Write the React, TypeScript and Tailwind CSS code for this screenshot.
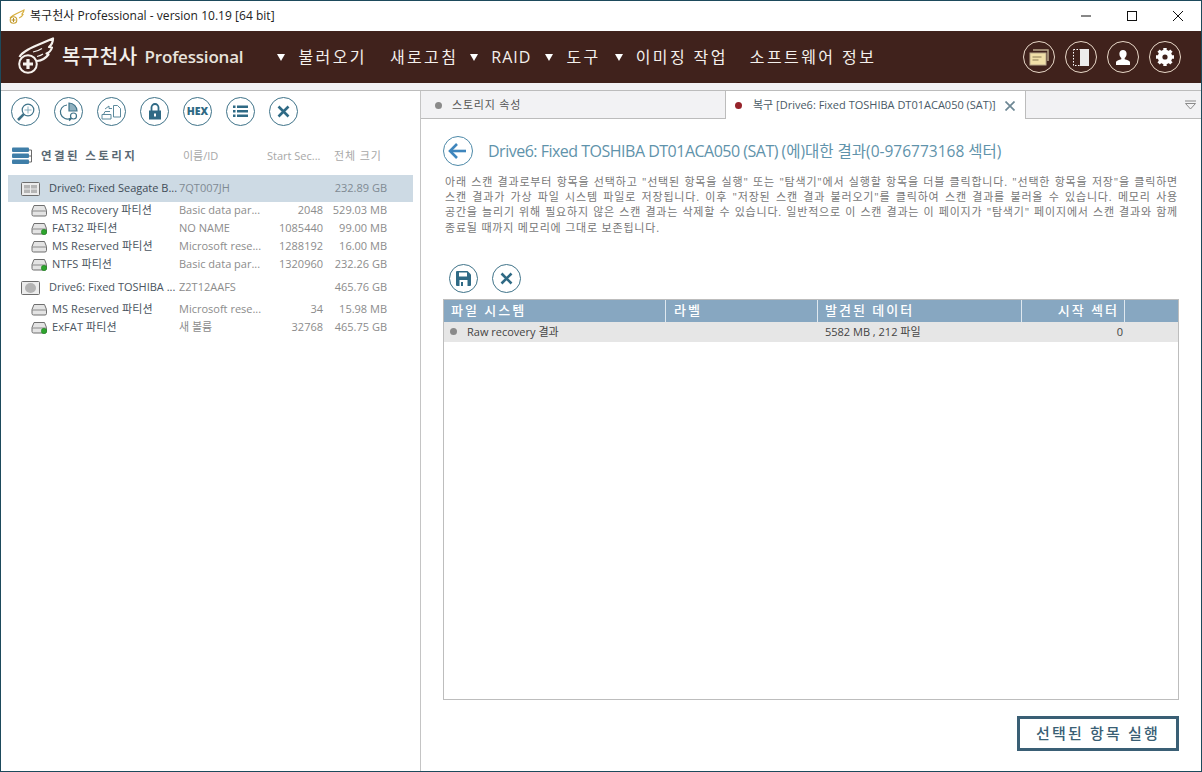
import React from 'react';

const FONT = "font-['Open_Sans','Noto_Sans_CJK_KR',sans-serif]";

const ToolButton = ({ children }: { children: React.ReactNode }) => (
  <div className="w-[29px] h-[29px] rounded-full border border-[#3f7389] flex items-center justify-center text-[#2f6a85] bg-white shrink-0">
    {children}
  </div>
);

const HeaderButton = ({ children }: { children: React.ReactNode }) => (
  <div className="w-[32px] h-[32px] rounded-full border border-[#e8d8c8] flex items-center justify-center shrink-0">
    {children}
  </div>
);

const MenuItem = ({ label, arrow, className, latin }: { label: string; arrow?: boolean; className?: string; latin?: boolean }) => (
  <div className={`flex items-center ${className ?? ''}`}>
    {arrow && (
      <svg width="8" height="7" viewBox="0 0 8 7" className="mr-[13px]">
        <path d="M0 0h8L4 7z" fill="#fff" />
      </svg>
    )}
    <span className={`text-[16px] text-[#f4f0ec] whitespace-nowrap ${latin ? 'tracking-[1px]' : 'tracking-[2.400px]'}`}>{label}</span>
  </div>
);

const PartitionIcon = ({ active }: { active?: boolean }) => (
  <svg width="17" height="13" viewBox="0 0 17 13" className="shrink-0">
    <path d="M3 1.500h10.500l2 5v4a1.500 1.500 0 0 1-1.500 1.500H2.500a1.500 1.500 0 0 1-1.500-1.500v-4z" fill="#e4e4e4" stroke="#6f6f6f" />
    <path d="M1 7h14.500" stroke="#8a8a8a" />
    {active && <circle cx="13" cy="10" r="2.700" fill="#2ea52e" stroke="#1d7d1d" strokeWidth="0.5" />}
  </svg>
);

const DiskIcon = ({ kind }: { kind: 'grid' | 'round' }) => (
  <svg width="19" height="14" viewBox="0 0 19 14" className="shrink-0">
    <rect x="0.500" y="0.500" width="18" height="13" rx="1" fill="#ececec" stroke="#6d6d6d" />
    {kind === 'grid' ? (
      <g fill="#b5b5b5">
        <rect x="3" y="3" width="6" height="3.500" />
        <rect x="10" y="3" width="6" height="3.500" />
        <rect x="3" y="7.500" width="6" height="3.500" />
        <rect x="10" y="7.500" width="6" height="3.500" />
      </g>
    ) : (
      <ellipse cx="9.500" cy="7" rx="5.500" ry="5" fill="#b3b3b3" />
    )}
  </svg>
);

const Columns = ({ name, id, start, size }: { name: string; id: string; start?: string; size: string }) => (
  <>
    <span className="w-[127px] shrink-0 text-[#4a5560] whitespace-nowrap overflow-hidden tracking-[0.1px]">{name}</span>
    <span className="w-[94px] shrink-0 text-[#8c8c8c] whitespace-nowrap">{id}</span>
    <span className="w-[50px] shrink-0 text-right text-[#8c8c8c]">{start}</span>
    <span className="w-[64px] shrink-0 text-right text-[#8c8c8c]">{size}</span>
  </>
);

const PartitionRow = (p: { name: string; id: string; start: string; size: string; active?: boolean; className?: string }) => (
  <div className={`h-[18px] flex items-center pl-[30px] text-[11px] ${p.className ?? ''}`}>
    <PartitionIcon active={p.active} />
    <span className="w-[4px] shrink-0" />
    <Columns name={p.name} id={p.id} start={p.start} size={p.size} />
  </div>
);

const WingLogo = () => (
  <svg width="40" height="40" viewBox="0 0 40 40" className="ml-[15px] shrink-0" fill="none" stroke="#f6f2ee">
    <path d="M3.500 20C7 13 20 9 37 1.500c0 4-1 6-4 8.500l3 .5c-1 3-2.500 5-5.500 6l2 1c-3 4-7 6-11.500 6.500" strokeWidth="2.200" strokeLinejoin="round" />
    <path d="M26 11.500c-3 2-6 3-9 3.500M27 17c-2 1.500-4 2-6 2.500" strokeWidth="1.200" />
    <circle cx="12" cy="27" r="8.800" strokeWidth="2" />
    <path d="M12 22v10M7 27h10" strokeWidth="3.200" />
  </svg>
);

export default function App() {
  return (
    <div className={`${FONT} w-[1202px] h-[772px] flex flex-col border border-[#1d4a5c] bg-white overflow-hidden`}>
      {/* title bar */}
      <div className="h-[30px] flex items-center shrink-0">
        <svg width="16" height="15" viewBox="0 0 16 15" className="ml-[8px]" fill="none" stroke="#d8b040">
          <path d="M1 9C3 6 9 4 15 1c0 2-1 3-2 4l1 .5c-1 2-2 3-4 3.500" strokeWidth="1.200" />
          <circle cx="4.500" cy="11" r="3.300" stroke="#c8a030" strokeWidth="1.100" />
          <path d="M4.500 9v4M2.500 11h4" stroke="#b89020" strokeWidth="1" />
        </svg>
        <span className="ml-[5px] text-[12px] text-[#222] whitespace-nowrap tracking-[0.03px]">복구천사 Professional - version 10.19 [64 bit]</span>
        <div className="ml-auto flex items-center">
          <div className="w-[46px] h-[30px] flex items-center justify-center">
            <svg width="10" height="10" viewBox="0 0 10 10"><path d="M0 5h10" stroke="#111" /></svg>
          </div>
          <div className="w-[46px] h-[30px] flex items-center justify-center">
            <svg width="10" height="10" viewBox="0 0 10 10"><rect x="0.500" y="0.500" width="9" height="9" fill="none" stroke="#111" /></svg>
          </div>
          <div className="w-[46px] h-[30px] flex items-center justify-center">
            <svg width="10" height="10" viewBox="0 0 10 10"><path d="M0 0l10 10M10 0L0 10" stroke="#111" /></svg>
          </div>
        </div>
      </div>

      {/* header */}
      <div className="h-[52px] bg-[#40221c] flex items-center shrink-0 text-white">
        <WingLogo />
        <span className="ml-[6px] text-[20px] font-medium text-[#f4f0ec] whitespace-nowrap tracking-[0.5px]">복구천사</span>
        <span className="ml-[7px] text-[17px] font-semibold text-[#e8e2dc] whitespace-nowrap tracking-[-0.2px]">Professional</span>
        <MenuItem label="불러오기" arrow className="ml-[34px]" />
        <MenuItem label="새로고침" className="ml-[23px]" />
        <MenuItem label="RAID" arrow latin className="ml-[12px]" />
        <MenuItem label="도구" arrow className="ml-[14px]" />
        <MenuItem label="이미징 작업" arrow className="ml-[14px]" />
        <MenuItem label="소프트웨어 정보" className="ml-[22px]" />
        <div className="ml-auto mr-[20px] flex gap-[10px]">
          <HeaderButton>
            <svg width="20" height="17" viewBox="0 0 20 17">
              <path d="M4 1h15v11" fill="none" stroke="#b9a98c" strokeWidth="1.500" />
              <rect x="1" y="4" width="16" height="12" fill="#f1dfa8" stroke="#b9a98c" />
              <path d="M3.500 8h9M3.500 11h6" stroke="#8b7a55" />
            </svg>
          </HeaderButton>
          <HeaderButton>
            <svg width="16" height="17" viewBox="0 0 16 17">
              <rect x="0.500" y="0.500" width="7" height="16" fill="none" stroke="#fff" strokeDasharray="1.500 1.500" />
              <rect x="7" y="0" width="9" height="17" fill="#ececec" />
            </svg>
          </HeaderButton>
          <HeaderButton>
            <svg width="14" height="15" viewBox="0 0 14 15">
              <path d="M7 0a3.600 3.600 0 0 1 3.600 3.800c0 2-.8 3.500-1.900 4.300v1.200c2 .6 5.300 1.400 5.300 3.200V15H0v-2.500c0-1.800 3.300-2.600 5.300-3.200V8.100C4.200 7.300 3.400 5.800 3.400 3.800A3.600 3.600 0 0 1 7 0z" fill="#fff" />
            </svg>
          </HeaderButton>
          <HeaderButton>
            <svg width="20" height="20" viewBox="0 0 20 20">
              <g stroke="#fff" strokeWidth="3.400">
                <path d="M10 1v18M1 10h18M3.600 3.600l12.800 12.800M16.400 3.600L3.600 16.400" />
              </g>
              <circle cx="10" cy="10" r="5.500" fill="none" stroke="#fff" strokeWidth="3.500" />
              <circle cx="10" cy="10" r="2.600" fill="#40221c" />
            </svg>
          </HeaderButton>
        </div>
      </div>

      <div className="h-[7px] bg-[#f3f3f5] shrink-0" />

      {/* main */}
      <div className="flex-1 flex min-h-0 border-t border-[#bcbcbc]">
        {/* left panel */}
        <div className="w-[420px] shrink-0 border-r border-[#c4c4c4] flex flex-col">
          <div className="flex gap-[14px] pl-[10px] pt-[6px]">
            <ToolButton>
              <svg width="20" height="20" viewBox="0 0 20 20" fill="none" stroke="#3f7389" strokeWidth="1.200">
                <circle cx="12" cy="8" r="5.800" />
                <path d="M7.800 12.200L2 18" strokeWidth="2.600" />
                <path d="M12 4.500v7M8.500 8h7" strokeWidth="0.900" stroke="#7ea6b8" />
              </svg>
            </ToolButton>
            <ToolButton>
              <svg width="20" height="20" viewBox="0 0 20 20" fill="none" stroke="#3f7389" strokeWidth="1.200">
                <path d="M8 3a7 7 0 1 0 4 13" />
                <path d="M10 1v8h8a8 8 0 0 0-8-8z" fill="#8fb0bf" />
                <circle cx="14.500" cy="14" r="3" fill="#fff" />
                <path d="M12.300 16.200L10 18.500" strokeWidth="1.800" />
              </svg>
            </ToolButton>
            <ToolButton>
              <svg width="21" height="16" viewBox="0 0 21 16" fill="none" stroke="#5d8a9d" strokeWidth="1">
                <path d="M1 10.500h9V15H1z" />
                <path d="M2.500 10.500L4 7.500h5" />
                <path d="M12.500 1.500h4l3 3V13h-7z" />
                <path d="M4 5l4-3v2.500h3" />
              </svg>
            </ToolButton>
            <ToolButton>
              <svg width="14" height="17" viewBox="0 0 14 17">
                <path d="M3.500 8V4.500a3.500 3.500 0 0 1 7 0V8" fill="none" stroke="#2f6a85" strokeWidth="1.800" />
                <rect x="1" y="7.500" width="12" height="9" fill="#2f6a85" />
                <rect x="6" y="10.500" width="2" height="3" fill="#fff" />
              </svg>
            </ToolButton>
            <ToolButton>
              <span className="text-[10.500px] font-extrabold text-[#2f6a85]">HEX</span>
            </ToolButton>
            <ToolButton>
              <svg width="15" height="13" viewBox="0 0 15 13" fill="#2f6a85">
                <rect x="0" y="0.500" width="2.500" height="2.500" />
                <rect x="0" y="5" width="2.500" height="2.500" />
                <rect x="0" y="9.500" width="2.500" height="2.500" />
                <rect x="4" y="0.500" width="11" height="2.500" />
                <rect x="4" y="5" width="11" height="2.500" />
                <rect x="4" y="9.500" width="11" height="2.500" />
              </svg>
            </ToolButton>
            <ToolButton>
              <svg width="13" height="13" viewBox="0 0 13 13"><path d="M1.500 1.500l10 10M11.500 1.500l-10 10" stroke="#2f6a85" strokeWidth="2.600" /></svg>
            </ToolButton>
          </div>

          {/* column heads */}
          <div className="h-[20px] mt-[20px] flex items-center text-[11px] pl-[11px]">
            <svg width="20" height="18" viewBox="0 0 20 18" className="shrink-0">
              <g fill="#3f7ea8">
                <rect x="0" y="0.500" width="17" height="4.500" rx="1" />
                <rect x="0" y="6.500" width="17" height="4.500" rx="1" />
                <rect x="0" y="12.500" width="17" height="4.500" rx="1" />
              </g>
              <path d="M17 3h2.500v12H17M17 9h2.500" fill="none" stroke="#6a6a6a" />
            </svg>
            <span className="ml-[9px] w-[142px] shrink-0 text-[11.500px] font-semibold text-[#5a6873] tracking-[2.400px] whitespace-nowrap">연결된 스토리지</span>
            <span className="w-[84px] shrink-0 text-[#a8a8a8]">이름/ID</span>
            <span className="w-[67px] shrink-0 text-[#a8a8a8] whitespace-nowrap">Start Sec...</span>
            <span className="text-[#a8a8a8] tracking-[0.9px] whitespace-nowrap">전체 크기</span>
          </div>

          {/* storage list */}
          <div className="mt-[9px] flex flex-col text-[11px]">
            <div className="h-[27px] ml-[7px] w-[405px] bg-[#cddae4] flex items-center pl-[13px]">
              <DiskIcon kind="grid" />
              <span className="w-[9px] shrink-0" />
              <span className="w-[130px] shrink-0 text-[#3f4c57] whitespace-nowrap">Drive0: Fixed Seagate B...</span>
              <span className="w-[94px] shrink-0 text-[#7f8a93]">7QT007JH</span>
              <span className="w-[50px] shrink-0" />
              <span className="w-[64px] shrink-0 text-right text-[#7f8a93]">232.89 GB</span>
            </div>
            <PartitionRow name="MS Recovery 파티션" id="Basic data par..." start="2048" size="529.03 MB" className="-mt-[1px]" />
            <PartitionRow name="FAT32 파티션" id="NO NAME" start="1085440" size="99.00 MB" active />
            <PartitionRow name="MS Reserved 파티션" id="Microsoft rese..." start="1288192" size="16.00 MB" />
            <PartitionRow name="NTFS 파티션" id="Basic data par..." start="1320960" size="232.26 GB" active />
            <div className="h-[27px] ml-[7px] w-[405px] flex items-center pl-[13px] mt-[1px]">
              <DiskIcon kind="round" />
              <span className="w-[9px] shrink-0" />
              <span className="w-[130px] shrink-0 text-[#4a5560] whitespace-nowrap">Drive6: Fixed TOSHIBA ...</span>
              <span className="w-[94px] shrink-0 text-[#8c8c8c]">Z2T12AAFS</span>
              <span className="w-[50px] shrink-0" />
              <span className="w-[64px] shrink-0 text-right text-[#8c8c8c]">465.76 GB</span>
            </div>
            <PartitionRow name="MS Reserved 파티션" id="Microsoft rese..." start="34" size="15.98 MB" className="-mt-[1px]" />
            <PartitionRow name="ExFAT 파티션" id="새 볼륨" start="32768" size="465.75 GB" active />
          </div>
        </div>

        {/* right panel */}
        <div className="flex-1 min-w-0 flex flex-col">
          {/* tabs */}
          <div className="h-[28px] bg-[#f2f2f4] border-b border-[#bcbcbc] flex shrink-0">
            <div className="w-[304px] flex items-center pl-[14px] pt-[1px] text-[11px] text-[#555]">
              <span className="w-[7px] h-[7px] rounded-full bg-[#8a8a8a]" />
              <span className="ml-[10px] tracking-[0.8px]">스토리지 속성</span>
            </div>
            <div className="w-[301px] h-[28px] bg-white border-x border-[#bcbcbc] flex items-center pl-[9px] pt-[1px] text-[11px] text-[#4a5a66]">
              <span className="w-[7px] h-[7px] rounded-full bg-[#96232a]" />
              <span className="ml-[11px] whitespace-nowrap">복구 [Drive6: Fixed TOSHIBA DT01ACA050 (SAT)]</span>
              <svg width="10" height="10" viewBox="0 0 10 10" className="ml-[9px] shrink-0"><path d="M0.500 0.500l9 9M9.500 0.500l-9 9" stroke="#6d8794" strokeWidth="1.700" /></svg>
            </div>
            <div className="ml-auto mr-[5px] self-center">
              <svg width="11" height="10" viewBox="0 0 11 10" fill="none" stroke="#8a8a8a"><path d="M0 1h11" /><path d="M0.500 3.500h10L5.500 9z" /></svg>
            </div>
          </div>

          <div className="flex-1 flex flex-col pl-[22px] pr-[22px] min-h-0">
            <div className="flex items-center mt-[17px] h-[30px]">
              <svg width="30" height="30" viewBox="0 0 30 30" className="shrink-0" fill="none">
                <circle cx="15" cy="15" r="14.500" stroke="#4d89a8" />
                <path d="M7 15h16" stroke="#3f86bd" strokeWidth="2.600" />
                <path d="M14 8l-7 7 7 7" stroke="#3f86bd" strokeWidth="2.600" />
              </svg>
              <span className="ml-[15px] text-[#5f93ab] whitespace-nowrap text-[16px] tracking-[-0.5px]">
                Drive6: Fixed TOSHIBA DT01ACA050 (SAT) <span className="text-[15.500px] tracking-[0px]">(에)대한 결과(0-976773168 섹터)</span>
              </span>
            </div>
            <div className="mt-[8px] ml-[2px] w-[733px] text-[11px] leading-[15.200px] text-[#777] tracking-[0.8px]">
              <div className="text-justify [text-align-last:justify]">아래 스캔 결과로부터 항목을 선택하고 "선택된 항목을 실행" 또는 "탐색기"에서 실행할 항목을 더블 클릭합니다. "선택한 항목을 저장"을 클릭하면</div>
              <div className="text-justify [text-align-last:justify]">스캔 결과가 가상 파일 시스템 파일로 저장됩니다. 이후 "저장된 스캔 결과 불러오기"를 클릭하여 스캔 결과를 불러올 수 있습니다. 메모리 사용</div>
              <div className="text-justify [text-align-last:justify]">공간을 늘리기 위해 필요하지 않은 스캔 결과는 삭제할 수 있습니다. 일반적으로 이 스캔 결과는 이 페이지가 "탐색기" 페이지에서 스캔 결과와 함께</div>
              <div>종료될 때까지 메모리에 그대로 보존됩니다.</div>
            </div>

            <div className="flex gap-[14px] mt-[29px] ml-[6px]">
              <ToolButton>
                <svg width="15" height="15" viewBox="0 0 15 15">
                  <path d="M0 1a1 1 0 0 1 1-1h10.500L15 3.500V14a1 1 0 0 1-1 1H1a1 1 0 0 1-1-1z" fill="#2f6a85" />
                  <rect x="3" y="1.500" width="8" height="4" fill="#fff" />
                  <rect x="3.500" y="9" width="8" height="6" fill="#fff" />
                  <rect x="5" y="11" width="2" height="4" fill="#2f6a85" />
                </svg>
              </ToolButton>
              <ToolButton>
                <svg width="13" height="13" viewBox="0 0 13 13"><path d="M1.500 1.500l10 10M11.500 1.500l-10 10" stroke="#2f6a85" strokeWidth="2.600" /></svg>
              </ToolButton>
            </div>

            {/* results table */}
            <div className="mt-[6px] w-[736px] h-[401px] border border-[#bdbdbd] flex flex-col shrink-0">
              <div className="h-[22px] bg-[#87a7c1] flex text-[13px] font-medium text-white tracking-[2px] shrink-0">
                <div className="w-[222px] border-r border-[#dfe8ef] pl-[7px] pb-[1px] flex items-center">파일 시스템</div>
                <div className="w-[152px] border-r border-[#dfe8ef] pl-[8px] pb-[1px] flex items-center">라벨</div>
                <div className="w-[204px] border-r border-[#dfe8ef] pl-[7px] pb-[1px] flex items-center">발견된 데이터</div>
                <div className="w-[103px] border-r border-[#dfe8ef] pr-[5px] pb-[1px] flex items-center justify-end whitespace-nowrap">시작 섹터</div>
              </div>
              <div className="h-[20px] bg-[#e6e6e6] flex items-center text-[11px] text-[#444] shrink-0">
                <div className="w-[222px] pl-[6px] flex items-center">
                  <span className="w-[7px] h-[7px] rounded-full bg-[#8a8a8a]" />
                  <span className="ml-[10px]">Raw recovery 결과</span>
                </div>
                <div className="w-[152px]" />
                <div className="w-[204px] pl-[7px]">5582 MB , 212 파일</div>
                <div className="w-[103px] pr-[2px] text-right">0</div>
              </div>
            </div>

            <div className="mt-[16px] flex justify-end">
              <button className="w-[162px] h-[35px] border-[3px] border-[#3a5f75] text-[15px] font-medium tracking-[2.200px] text-[#3a5f75] flex items-center justify-center whitespace-nowrap">
                선택된 항목 실행
              </button>
            </div>
          </div>
        </div>
      </div>
    </div>
  );
}
